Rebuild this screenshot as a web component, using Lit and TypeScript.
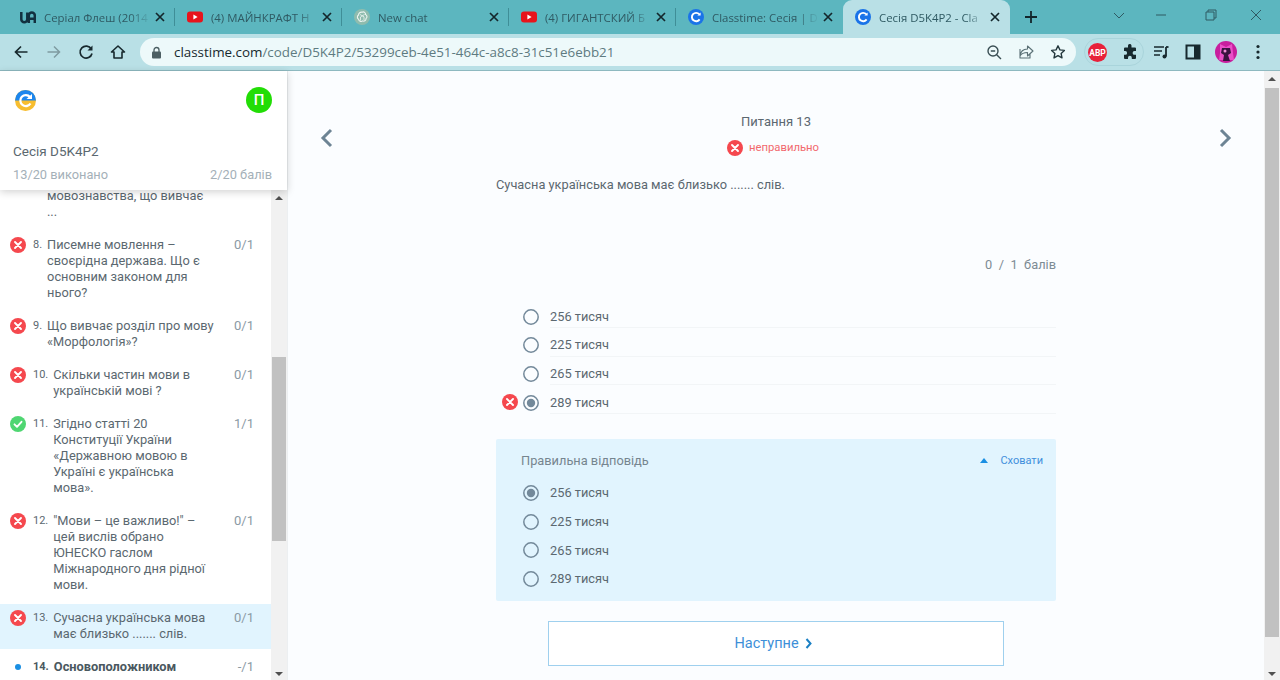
import { LitElement, html, css, svg } from "lit";
import { customElement } from "lit/decorators.js";

const cIcon = html`<svg class="fav" viewBox="0 0 16 16"><circle cx="8" cy="8" r="8" fill="#1a73e8"/><path d="M11.2 5.2A4.2 4.2 0 1 0 11.6 10.4" fill="none" stroke="#fff" stroke-width="1.9"/><path d="M9.4 6.6h3.2V3.4z" fill="#fff"/></svg>`;
const ytIcon = html`<svg class="fav" viewBox="0 0 16 16"><rect x="0" y="2.5" width="16" height="11" rx="3" fill="#e8141c"/><path d="M6.4 5.5v5l4.2-2.5z" fill="#fff"/></svg>`;
const uaIcon = html`<svg class="fav" viewBox="0 0 16 16"><path d="M1.300 3v7.200a3 3 0 0 0 6 0V3.500M8.800 14V6.500a3 3 0 0 1 6 0V14M8.800 9.800h6" fill="none" stroke="#12303f" stroke-width="2.500"/></svg>`;
const gptIcon = html`<svg class="fav" viewBox="0 0 16 16"><circle cx="8" cy="8" r="8" fill="#8fbcae"/><path d="M8 3.200c2-1 3.800.6 3.500 2.300 1.700.7 2 3 .5 4.100.2 2-1.900 3.200-3.400 2.300-1.500 1.200-3.800.3-4-1.600C3 9.300 3 7 4.500 6 4.500 4 6.500 2.800 8 3.200z" fill="none" stroke="#eef5f2" stroke-width="1.100"/><path d="M6 5.500l4 2.300v3.500M10.500 5.500L6.500 8v3.500" fill="none" stroke="#eef5f2" stroke-width=".8"/></svg>`;
const closeX = html`<svg class="tabx" viewBox="0 0 10 10"><path d="M1 1l8 8M9 1l-8 8" stroke="#14272c" stroke-width="1.700" fill="none"/></svg>`;

const tabs = [
  { icon: uaIcon, title: "Серіал Флеш (2014", cls: "" },
  { icon: ytIcon, title: "(4) МАЙНКРАФТ Н", cls: "" },
  { icon: gptIcon, title: "New chat", cls: "" },
  { icon: ytIcon, title: "(4) ГИГАНТСКИЙ Б", cls: "" },
  { icon: cIcon, title: "Classtime: Сесія | D", cls: "" },
  { icon: cIcon, title: "Сесія D5K4P2 - Cla", cls: "active" },
];

type Item = { n?: string; lines: string[]; score?: string; st?: string; cur?: boolean; bold?: boolean; first?: boolean };
const items: Item[] = [
  { lines: ["мовознавства, що вивчає", "..."], first: true },
  { n: "8.", lines: ["Писемне мовлення –", "своєрідна держава. Що є", "основним законом для", "нього?"], score: "0/1", st: "bad" },
  { n: "9.", lines: ["Що вивчає розділ про мову", "«Морфологія»?"], score: "0/1", st: "bad" },
  { n: "10.", lines: ["Скільки частин мови в", "українській мові ?"], score: "0/1", st: "bad" },
  { n: "11.", lines: ["Згідно статті 20", "Конституції України", "«Державною мовою в", "Україні є українська", "мова»."], score: "1/1", st: "ok" },
  { n: "12.", lines: ["\"Мови – це важливо!\" –", "цей вислів обрано", "ЮНЕСКО гаслом", "Міжнародного дня рідної", "мови."], score: "0/1", st: "bad" },
  { n: "13.", lines: ["Сучасна українська мова", "має близько ....... слів."], score: "0/1", st: "bad", cur: true },
  { n: "14.", lines: ["Основоположником"], score: "-/1", st: "dot", bold: true },
];

const badIcon = html`<svg class="st" viewBox="0 0 16 16"><circle cx="8" cy="8" r="8" fill="#f5484e"/><path d="M5 5l6 6M11 5l-6 6" stroke="#fff" stroke-width="1.900" stroke-linecap="round"/></svg>`;
const okIcon = html`<svg class="st" viewBox="0 0 16 16"><circle cx="8" cy="8" r="8" fill="#4fd672"/><path d="M4.500 8.300l2.500 2.500 4.500-5" fill="none" stroke="#fff" stroke-width="1.900" stroke-linecap="round" stroke-linejoin="round"/></svg>`;

const opts = ["256 тисяч", "225 тисяч", "265 тисяч", "289 тисяч"];

@customElement("app-root")
export class AppRoot extends LitElement {
  static styles = css`
    :host { display: block; width: 1280px; height: 680px; overflow: hidden; font-family: Roboto, sans-serif; color: #5b6870; }
    .chrome { font-family: "Open Sans", "Noto Sans", sans-serif; }
    .tabbar { height: 34px; background: #5cb6bf; display: flex; align-items: stretch; padding-left: 8px; position: relative; }
    .tab { width: 167px; flex: none; display: flex; align-items: center; padding: 0 0 0 12px; box-sizing: border-box; position: relative; }
    .tab::after { content: ""; position: absolute; right: 0; top: 8px; height: 18px; width: 1px; background: #3f8e97; }
    .tab.active { background: #b9e0e6; border-radius: 9px 9px 0 0; }
    .tab.active::after, .tab.nosep::after { display: none; }
    .fav { width: 16px; height: 16px; flex: none; margin-right: 8px; }
    .ttl { font-size: 11.400px; color: #2f5a63; width: 107px; flex: none; white-space: nowrap; overflow: hidden;
      -webkit-mask-image: linear-gradient(90deg, #000 80%, transparent 100%); mask-image: linear-gradient(90deg, #000 80%, transparent 100%); }
    .tabx { width: 10px; height: 10px; margin-left: 4px; flex: none; }
    .plus { width: 14px; height: 14px; margin-left: 14px; align-self: center; flex: none; }
    .winbtns { margin-left: auto; display: flex; align-items: center; padding: 0 18px 5px 0; gap: 0; }
    .winbtns svg { width: 12px; height: 12px; display: block; }
    .wb1 { margin-right: 30px; } .wb2 { margin-right: 38px; } .wb3 { margin-right: 33px; }

    .toolbar { height: 37px; box-sizing: border-box; background: #b9e0e6; border-bottom: 1px solid #8eb9c0; display: flex; align-items: center; padding-left: 13px; }
    .tb { width: 16px; height: 16px; flex: none; display: block; }
    .nav { display: flex; gap: 16px; margin-right: 14px; }
    .nav .fw { margin-left: 1px; }
    .omni { width: 936px; height: 28px; flex: none; background: #edf9fa; border-radius: 14px; display: flex; align-items: center; padding: 0 10px 0 11px; box-sizing: border-box; }
    .lock { width: 11px; height: 13px; margin-right: 12px; flex: none; }
    .url { font-size: 13.400px; color: #5e7b81; white-space: nowrap; flex: 1; }
    .url b { font-weight: 400; color: #17292e; }
    .omni-ic { display: flex; gap: 16px; }
    .ext { margin-left: 8px; width: 60px; height: 28px; border-radius: 14px; border: 1px solid #a9d4db; display: flex; align-items: center; gap: 15px; padding-left: 3px; box-sizing: border-box; flex: none; }
    .abp { width: 19px; height: 19px; display: block; flex: none; }
    .tbr { display: flex; align-items: center; gap: 16px; margin-left: 9px; }
    .avatar { width: 22px; height: 22px; display: block; flex: none; margin-left: -2px; }
    .dots { width: 4px; height: 16px; margin-left: 3px; }

    .body { display: flex; height: 609px; background: #fbfdff; }
    .side { width: 288px; flex: none; box-sizing: border-box; border-right: 1px solid #eceff1; background: #fff; display: flex; flex-direction: column; height: 609px; }
    .head { height: 119px; flex: none; background: #fff; box-shadow: 0 2px 8px rgba(0,0,0,.18); position: relative; z-index: 1; padding: 17px 15px 0 13px; box-sizing: border-box; }
    .hrow { display: flex; justify-content: space-between; align-items: center; height: 24px; padding-left: 2px; }
    .logo { width: 21px; height: 21px; display: block; }
    .user { width: 26px; height: 26px; border-radius: 50%; background: #22dd06; color: #fff; display: flex; align-items: center; justify-content: center; font-size: 15px; font-weight: 500; }
    .sess { font-size: 13.500px; color: #5b6870; margin-top: 31px; line-height: 16px; }
    .stats { display: flex; justify-content: space-between; font-size: 12.800px; color: #a4b0b8; margin-top: 8px; line-height: 16px; }
    .listwrap { flex: 1; display: flex; min-height: 0; overflow: hidden; }
    .list { flex: 1; min-width: 0; }
    .item { display: flex; padding: 6px 0 7px; margin-bottom: 4px; font-size: 12.800px; line-height: 16px; color: #5b6870; }
    .item.first { margin-top: -8px; }
    .item.cur { background: #e1f4fe; }
    .ic { width: 33px; flex: none; display: flex; justify-content: flex-start; padding-left: 10px; box-sizing: border-box; }
    .st { width: 16px; height: 16px; display: block; }
    .dot { width: 6px; height: 6px; border-radius: 50%; background: #1a8fe3; margin: 5px 0 0 5px; }
    .num { font-size: 11px; margin-right: 5px; flex: none; }
    .num.blank { width: 9px; }
    .txt { flex: 1; min-width: 0; white-space: nowrap; }
    .item.bold .txt, .item.bold .num { font-weight: 700; color: #4a5860; }
    .sc { width: 36px; flex: none; padding-right: 17px; text-align: right; color: #8b9aa4; font-size: 13px; }
    .sb { width: 16px; flex: none; background: #f1f1f1; position: relative; display: flex; flex-direction: column; }
    .th { position: absolute; left: 1px; right: 1px; background: #c1c1c1; }
    .arr { position: absolute; left: 4px; width: 0; height: 0; border-left: 4px solid transparent; border-right: 4px solid transparent; }
    .arr.up { border-bottom: 4px solid #505050; top: 6px; }
    .arr.dn { border-top: 4px solid #505050; bottom: 4px; }

    .main { flex: 1; display: grid; grid-template-columns: 1fr 560px 1fr; min-width: 0; }
    .lcol { padding: 56px 0 0 30px; }
    .rcol { padding: 56px 30px 0 0; display: flex; justify-content: flex-end; align-items: flex-start; }
    .chev { width: 16px; height: 22px; display: block; }
    .col { display: flex; flex-direction: column; padding-top: 42px; }
    .title { text-align: center; font-size: 13px; line-height: 18px; color: #5b6870; }
    .status { display: flex; justify-content: center; align-items: center; gap: 6px; font-size: 11.300px; line-height: 16px; color: #f2696e; margin-top: 9px; padding-right: 6px; }
    .q { font-size: 12.800px; line-height: 18px; margin-top: 20px; color: #5b6870; }
    .pts { text-align: right; font-size: 12.800px; line-height: 16px; color: #7d8b94; margin-top: 63px; word-spacing: 3.300px; }
    .opts { margin-top: 26.500px; display: flex; flex-direction: column; }
    .opt { display: flex; align-items: stretch; height: 28.670px; box-sizing: border-box; padding: 6px 0 0 27px; position: relative; }
    .rwrap { width: 16px; flex: none; display: flex; align-items: center; margin-right: 11px; }
    .radio { width: 16px; height: 16px; display: block; }
    .otext { flex: 1; display: flex; align-items: center; font-size: 12.800px; color: #5b6870; border-bottom: 1px solid #f2f5f7; }
    .wrong { position: absolute; left: 6px; top: 9px; width: 16px; height: 16px; }
    .panel { background: #e1f4fe; border-radius: 2px; margin-top: 24.500px; padding: 13px 13px 10.300px 25px; }
    .phead { display: flex; align-items: center; height: 18px; font-size: 12.800px; color: #76858f; }
    .tri { margin-left: auto; width: 0; height: 0; border-left: 4.500px solid transparent; border-right: 4.500px solid transparent; border-bottom: 5px solid #1a8fe3; margin-right: 12px; }
    .hide { font-size: 11px; color: #3f8fdc; }
    .popts { margin-top: 6px; margin-left: -25px; }
    .popts .otext { border-bottom: 0; }
    .next { margin: 20px 52px 0; height: 45px; padding-right: 6px; box-sizing: border-box; border: 1.500px solid #9fd0ee; background: #fff; display: flex; align-items: center; justify-content: center; gap: 6px; font-size: 14.500px; color: #3d8fd8; flex: none; }
    .next svg { width: 7px; height: 11px; }
    .mainsb { width: 16px; flex: none; background: #f1f1f1; position: relative; }
    .mainth { top: 17px; height: 549px; }
    .sideth { top: 167px; height: 184px; }
  `;

  radio(on: boolean) {
    return html`<svg class="radio" viewBox="0 0 16 16"><circle cx="8" cy="8" r="7.200" fill="none" stroke="#73899a" stroke-width="1.500"/>${on ? svg`<circle cx="8" cy="8" r="4.200" fill="#73899a"/>` : ""}</svg>`;
  }

  render() {
    return html`
      <div class="chrome">
        <div class="tabbar">
          ${tabs.map((t, i) => html`<div class="tab ${t.cls} ${i === 4 ? "nosep" : ""}">${t.icon}<span class="ttl">${t.title}</span>${closeX}</div>`)}
          <svg class="plus" viewBox="0 0 14 14"><path d="M7 1v12M1 7h12" stroke="#12262b" stroke-width="1.800"/></svg>
          <div class="winbtns">
            <svg class="wb1" viewBox="0 0 12 12"><path d="M1 4l5 5 5-5" fill="none" stroke="#2f5a63"/></svg>
            <svg class="wb2" viewBox="0 0 12 12"><path d="M1 6h10" stroke="#2f5a63"/></svg>
            <svg class="wb3" viewBox="0 0 12 12"><path d="M3 3V1h8v8H9M1 3h8v8H1z" fill="none" stroke="#2f5a63"/></svg>
            <svg viewBox="0 0 12 12"><path d="M1 1l10 10M11 1L1 11" stroke="#2f5a63"/></svg>
          </div>
        </div>
        <div class="toolbar">
          <div class="nav">
            <svg class="tb" viewBox="0 0 16 16"><path d="M14.500 8H2.500M8 2.500L2.500 8 8 13.500" fill="none" stroke="#17292e" stroke-width="1.700"/></svg>
            <svg class="tb fw" viewBox="0 0 16 16"><path d="M1.500 8h12M8 2.500L13.500 8 8 13.500" fill="none" stroke="#7f9ba1" stroke-width="1.500"/></svg>
            <svg class="tb" viewBox="0 0 16 16"><path d="M13.300 5A6 6 0 1 0 14 9.500" fill="none" stroke="#17292e" stroke-width="1.700"/><path d="M14.500 1.500v5h-5z" fill="#17292e"/></svg>
            <svg class="tb" viewBox="0 0 16 16"><path d="M8 2L1.500 8H4v6h8V8h2.500z" fill="none" stroke="#17292e" stroke-width="1.600" stroke-linejoin="round"/></svg>
          </div>
          <div class="omni">
            <svg class="lock" viewBox="0 0 11 13"><path d="M3 6V4a2.500 2.500 0 0 1 5 0v2" fill="none" stroke="#4c5f63" stroke-width="1.300"/><rect x="1" y="5.500" width="9" height="7" rx="1" fill="#4c5f63"/></svg>
            <span class="url"><b>classtime.com</b>/code/D5K4P2/53299ceb-4e51-464c-a8c8-31c51e6ebb21</span>
            <div class="omni-ic">
              <svg class="tb" viewBox="0 0 16 16"><circle cx="7" cy="7" r="5" fill="none" stroke="#3a4f54" stroke-width="1.400"/><path d="M4.800 7h4.400M10.700 10.700L15 15" stroke="#3a4f54" stroke-width="1.400"/></svg>
              <svg class="tb" viewBox="0 0 16 16"><path d="M9.500 2v3C5 5 2.500 8 2 12c1.500-2.500 4-3.500 7.500-3.500V12L15 7zM12 10v4H2V5" fill="none" stroke="#5a7075" stroke-width="1.100" stroke-linejoin="round"/></svg>
              <svg class="tb" viewBox="0 0 16 16"><path d="M8 1.800l1.900 4.100 4.500.5-3.300 3 .9 4.500L8 11.600l-4 2.300.9-4.500-3.300-3 4.500-.5z" fill="none" stroke="#24383d" stroke-width="1.400" stroke-linejoin="round"/></svg>
            </div>
          </div>
          <div class="ext">
            <svg class="abp" viewBox="0 0 19 19"><circle cx="9.500" cy="9.500" r="9.500" fill="#e8213a"/><text x="9.500" y="12.500" text-anchor="middle" font-size="8.500" font-weight="700" fill="#fff" font-family="Roboto, sans-serif">ABP</text></svg>
            <svg class="tb" viewBox="0 0 16 16"><path d="M6 1.500a1.800 1.800 0 0 1 3.500 0V3.500H13a1 1 0 0 1 1 1V7h-1.500a1.900 1.900 0 0 0 0 3.800H14V14a1 1 0 0 1-1 1H9.800v-1.300a1.900 1.900 0 0 0-3.800 0V15H3a1 1 0 0 1-1-1v-3.200h1.200a1.900 1.900 0 0 0 0-3.800H2V4.500a1 1 0 0 1 1-1h3z" fill="#17292e"/></svg>
          </div>
          <div class="tbr">
            <svg class="tb" viewBox="0 0 16 16"><path d="M1 3h10M1 7h8M1 11h6" stroke="#17292e" stroke-width="1.600"/><path d="M13 3v9.500" stroke="#17292e" stroke-width="1.800"/><circle cx="11.500" cy="12.500" r="2" fill="#17292e"/><path d="M13 3h2.500" stroke="#17292e" stroke-width="1.800"/></svg>
            <svg class="tb" viewBox="0 0 16 16"><rect x="1.500" y="1.500" width="13" height="13" fill="none" stroke="#17292e" stroke-width="2"/><rect x="9" y="2" width="5" height="12" fill="#17292e"/></svg>
            <svg class="avatar" viewBox="0 0 22 22"><circle cx="11" cy="11" r="11" fill="#c81e9e"/><path d="M5 3l6 3 6-3 1 9 1 7H4l1-7z" fill="#ea4fc8"/><path d="M7 7h8l1 5-3 2 2 6H8l1-6-3-2z" fill="#3a1240"/><circle cx="10" cy="10" r="1.500" fill="#f08fd8"/></svg>
            <svg class="dots" viewBox="0 0 4 16"><circle cx="2" cy="2.500" r="1.600" fill="#17292e"/><circle cx="2" cy="8" r="1.600" fill="#17292e"/><circle cx="2" cy="13.500" r="1.600" fill="#17292e"/></svg>
          </div>
        </div>
      </div>
      <div class="body">
        <aside class="side">
          <div class="head">
            <div class="hrow">
              <svg class="logo" viewBox="0 0 21 21"><defs><clipPath id="t"><rect width="21" height="10.500"/></clipPath></defs><circle cx="10.500" cy="10.500" r="10.500" fill="#f7bd2f"/><circle cx="10.500" cy="10.500" r="10.500" fill="#1c86ee" clip-path="url(#t)"/><path d="M15 7a5.500 5.500 0 1 0 .5 6.500" fill="none" stroke="#fff" stroke-width="2.300"/><path d="M11.500 9h5.500V4z" fill="#fff"/></svg>
              <div class="user">П</div>
            </div>
            <div class="sess">Сесія D5K4P2</div>
            <div class="stats"><span>13/20 виконано</span><span>2/20 балів</span></div>
          </div>
          <div class="listwrap">
            <div class="list">
              ${items.map((it) => html`
                <div class="item ${it.cur ? "cur" : ""} ${it.bold ? "bold" : ""} ${it.first ? "first" : ""}">
                  <div class="ic">${it.st === "bad" ? badIcon : it.st === "ok" ? okIcon : it.st === "dot" ? html`<div class="dot"></div>` : ""}</div>
                  ${it.n ? html`<div class="num">${it.n}</div>` : html`<div class="num blank"></div>`}
                  <div class="txt">${it.lines.map((l) => html`<div>${l}</div>`)}</div>
                  <div class="sc">${it.score ?? ""}</div>
                </div>`)}
            </div>
            <div class="sb"><div class="arr up"></div><div class="th sideth"></div><div class="arr dn"></div></div>
          </div>
        </aside>
        <main class="main">
          <div class="lcol"><svg class="chev" viewBox="0 0 16 22"><path d="M13 3L5 11l8 8" fill="none" stroke="#6d8494" stroke-width="3"/></svg></div>
          <div class="col">
            <div class="title">Питання 13</div>
            <div class="status">${badIcon}<span>неправильно</span></div>
            <div class="q">Сучасна українська мова має близько ....... слів.</div>
            <div class="pts">0 / 1 балів</div>
            <div class="opts">
              ${opts.map((o, i) => html`<div class="opt">${i === 3 ? html`<svg class="wrong" viewBox="0 0 16 16"><circle cx="8" cy="8" r="8" fill="#f5484e"/><path d="M5 5l6 6M11 5l-6 6" stroke="#fff" stroke-width="1.900" stroke-linecap="round"/></svg>` : ""}<div class="rwrap">${this.radio(i === 3)}</div><div class="otext">${o}</div></div>`)}
            </div>
            <div class="panel">
              <div class="phead"><span>Правильна відповідь</span><i class="tri"></i><span class="hide">Сховати</span></div>
              <div class="popts">
                ${opts.map((o, i) => html`<div class="opt"><div class="rwrap">${this.radio(i === 0)}</div><div class="otext">${o}</div></div>`)}
              </div>
            </div>
            <div class="next"><span>Наступне</span><svg viewBox="0 0 7 11"><path d="M1.500 1l4 4.500-4 4.500" fill="none" stroke="#1b80c4" stroke-width="2"/></svg></div>
          </div>
          <div class="rcol"><svg class="chev" viewBox="0 0 16 22"><path d="M3 3l8 8-8 8" fill="none" stroke="#6d8494" stroke-width="3"/></svg></div>
        </main>
        <div class="mainsb"><div class="arr up"></div><div class="th mainth"></div><div class="arr dn"></div></div>
      </div>
    `;
  }
}
